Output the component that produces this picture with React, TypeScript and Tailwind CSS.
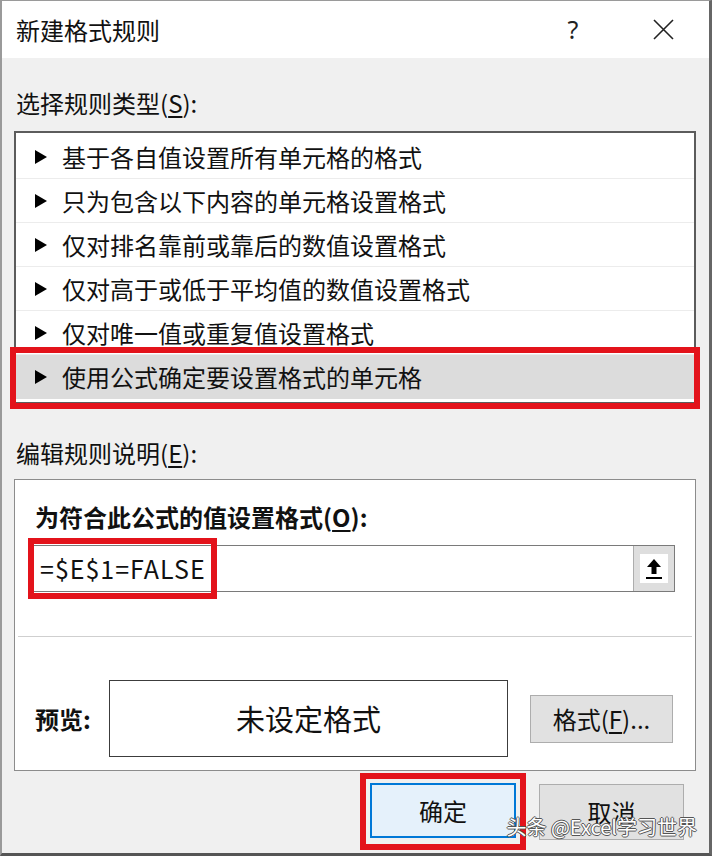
import type { ReactNode } from "react";

const rules = [
  "基于各自值设置所有单元格的格式",
  "只为包含以下内容的单元格设置格式",
  "仅对排名靠前或靠后的数值设置格式",
  "仅对高于或低于平均值的数值设置格式",
  "仅对唯一值或重复值设置格式",
  "使用公式确定要设置格式的单元格",
];

// Red annotation frame drawn over a highlighted control.
function Mark({ className }: { className: string }) {
  return <div className={`pointer-events-none absolute border-[6px] border-[#e3131b] ${className}`} />;
}

function Label({ children }: { children: ReactNode }) {
  return <div className="flex h-[32px] items-center pl-[2px] text-[24px] leading-none text-[#111]">{children}</div>;
}

function Triangle() {
  return (
    <svg width="12" height="14" viewBox="0 0 12 14" className="shrink-0">
      <path d="M0 0L12 7L0 14Z" fill="#000" />
    </svg>
  );
}

function RuleRow({ text, selected, last }: { text: string; selected: boolean; last: boolean }) {
  return (
    <div className="relative">
      <div
        className={`flex h-[44px] items-center gap-[15px] pl-[19px] ${selected ? "bg-[#dcdcdc]" : ""} ${
          last ? "" : "border-b border-[#ececec]"
        }`}
      >
        <Triangle />
        <span className="text-[24px] leading-none text-[#111]">{text}</span>
      </div>
      {selected && <Mark className="-top-[8px] -right-[6px] -bottom-[10px] -left-[6px]" />}
    </div>
  );
}

export default function App() {
  return (
    <div className="relative flex h-[856px] w-[712px] flex-col overflow-hidden border-t border-l-2 border-t-[#9a9a9a] border-l-[#9a9a9a] border-r-[3px] border-b-[3px] border-r-[#666] border-b-[#555] bg-[#f0f0f0] font-['Noto_Sans_CJK_SC','Noto_Sans',sans-serif]">
      {/* title bar */}
      <div className="flex h-[57px] shrink-0 items-center bg-white pl-[14px] pr-[23px]">
        <div className="flex-1 text-[24px] leading-none text-[#111]">新建格式规则</div>
        <div className="flex w-[46px] justify-center font-['Noto_Sans',sans-serif] text-[25px] leading-none text-[#222]">?</div>
        <div className="ml-[44px] flex w-[46px] justify-center">
          <svg width="21" height="21" viewBox="0 0 21 21">
            <path d="M1 1L20 20M20 1L1 20" stroke="#222" strokeWidth="1.6" />
          </svg>
        </div>
      </div>

      <div className="flex flex-1 flex-col pl-[12px] pr-[13px]">
        <div className="mt-[29px]">
          <Label>
            选择规则类型(<span className="underline underline-offset-[3px]">S</span>):
          </Label>
        </div>

        {/* rule type list */}
        <div className="mt-[12px] border-2 border-[#5c5c5c] bg-white pt-[2px] pb-[3px]">
          {rules.map((rule, i) => (
            <RuleRow key={rule} text={rule} selected={i === rules.length - 1} last={i === rules.length - 1} />
          ))}
        </div>

        <div className="mt-[33px]">
          <Label>
            编辑规则说明(<span className="underline underline-offset-[3px]">E</span>):
          </Label>
        </div>

        {/* rule description */}
        <div className="mt-[10px] flex h-[292px] flex-col border border-[#8c8c8c] bg-white pt-[21px]">
          <div className="flex h-[32px] items-center pl-[20px] text-[24px] leading-none font-bold text-[#111]">
            为符合此公式的值设置格式(<span className="underline underline-offset-[3px]">O</span>):
          </div>
          <div className="relative mt-[12px] mr-[20px] ml-[15px] flex h-[47px] border border-[#7a7a7a]">
            <div className="flex flex-1 items-center pl-[9px] text-[25px] leading-none tracking-[1px] text-[#111]">=$E$1=FALSE</div>
            <div className="flex w-[41px] items-center justify-center border-l border-[#adadad] bg-[#dedede]">
              <div className="flex h-[29px] w-[28px] items-center justify-center bg-white">
                <svg width="16" height="22" viewBox="0 0 16 22">
                  <path d="M8 1L15 9H10.5V16H5.5V9H1Z" fill="#000" />
                  <rect x="0" y="19" width="16" height="2" fill="#000" />
                </svg>
              </div>
            </div>
            <Mark className="-top-[8px] -left-[3px] h-[61px] w-[189px]" />
          </div>
          <div className="mx-[3px] mt-[44px] h-px bg-[#cfcfcf]" />
          <div className="mt-[43px] flex items-center pl-[20px]">
            <div className="w-[74px] text-[24px] leading-none font-bold text-[#111]">预览:</div>
            <div className="flex h-[77px] w-[399px] items-center justify-center border border-[#3c3c3c] text-[29px] leading-none text-[#111]">
              未设定格式
            </div>
            <div className="ml-[22px] flex h-[48px] w-[143px] items-center justify-center border border-[#adadad] bg-[#e1e1e1] text-[24px] leading-none text-[#111]">
              格式(<span className="underline underline-offset-[3px]">F</span>)...
            </div>
          </div>
        </div>

        {/* dialog buttons */}
        <div className="mt-[12px] flex justify-end gap-[23px] pr-[12px]">
          <div className="relative">
            <div className="flex h-[55px] w-[146px] items-center justify-center border-2 border-[#0078d7] bg-[#e5f1fb] text-[24px] leading-none text-[#111]">
              确定
            </div>
            <Mark className="-top-[10px] -right-[10px] -bottom-[10px] -left-[10px]" />
          </div>
          <div className="mt-[1px] flex h-[56px] w-[145px] items-center justify-center border border-[#adadad] bg-[#e1e1e1] text-[24px] leading-none text-[#111]">
            取消
          </div>
        </div>
      </div>

      {/* watermark */}
      <div className="absolute right-[12px] bottom-[16px] text-[20px] leading-none text-white [text-shadow:1px_0_0_#555,-1px_0_0_#555,0_1px_0_#555,0_-1px_0_#555]">
        头条 @Excel学习世界
      </div>
    </div>
  );
}
